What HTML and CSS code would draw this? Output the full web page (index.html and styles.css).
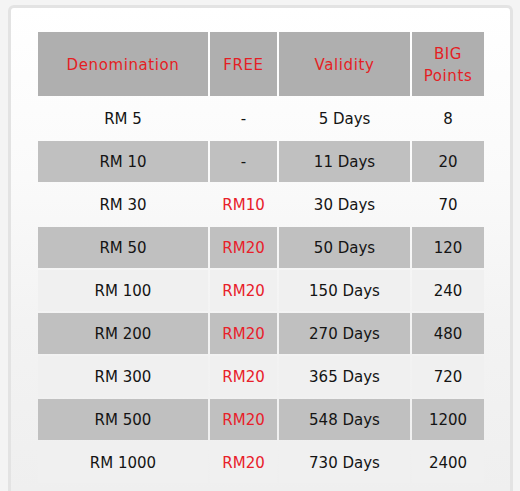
FILE: index.html
```html
<!DOCTYPE html>
<html>
<head>
<meta charset="utf-8">
<link rel="stylesheet" href="styles.css">
</head>
<body>
<div class="panel">
  <table class="rates">
    <colgroup>
      <col class="c-denom">
      <col class="c-free">
      <col class="c-valid">
      <col class="c-points">
    </colgroup>
    <thead>
      <tr>
        <th>Denomination</th>
        <th>FREE</th>
        <th>Validity</th>
        <th>BIG Points</th>
      </tr>
    </thead>
    <tbody>
      <tr class="plain"><td>RM 5</td><td>-</td><td>5 Days</td><td>8</td></tr>
      <tr class="grey"><td>RM 10</td><td>-</td><td>11 Days</td><td>20</td></tr>
      <tr class="plain"><td>RM 30</td><td class="free">RM10</td><td>30 Days</td><td>70</td></tr>
      <tr class="grey"><td>RM 50</td><td class="free">RM20</td><td>50 Days</td><td>120</td></tr>
      <tr class="light"><td>RM 100</td><td class="free">RM20</td><td>150 Days</td><td>240</td></tr>
      <tr class="grey"><td>RM 200</td><td class="free">RM20</td><td>270 Days</td><td>480</td></tr>
      <tr class="light"><td>RM 300</td><td class="free">RM20</td><td>365 Days</td><td>720</td></tr>
      <tr class="grey"><td>RM 500</td><td class="free">RM20</td><td>548 Days</td><td>1200</td></tr>
      <tr class="light"><td>RM 1000</td><td class="free">RM20</td><td>730 Days</td><td>2400</td></tr>
    </tbody>
  </table>
</div>
</body>
</html>
```
FILE: styles.css
```css
html, body {
  margin: 0;
  padding: 0;
  background: #f4f4f4;
  height: 100%;
  overflow: hidden;
}

body {
  font-family: "DejaVu Sans", sans-serif;
}

.panel {
  margin: 5px 7px 0 8px;
  border: 3px solid #e3e3e3;
  border-bottom: none;
  border-radius: 6px 6px 0 0;
  background: linear-gradient(to bottom, #ffffff 0%, #fafafa 35%, #f3f3f3 65%, #efefef 100%);
  padding: 22px 24px 0 25px;
  height: calc(100% - 5px);
  box-sizing: border-box;
}

.rates {
  border-collapse: separate;
  border-spacing: 2px;
  table-layout: fixed;
  width: 450px;
}

.c-denom { width: 170px; }
.c-free { width: 67px; }
.c-valid { width: 131px; }
.c-points { width: 72px; }

.rates th {
  background: #afafaf;
  color: #e41e24;
  font-weight: normal;
  font-size: 15px;
  letter-spacing: 0.6px;
  line-height: 22px;
  height: 64px;
  padding: 2px 4px 0;
  text-align: center;
  vertical-align: middle;
  box-sizing: border-box;
}

.rates td {
  height: 41px;
  padding: 1px 0 0;
  font-size: 15px;
  color: #141414;
  text-align: center;
  vertical-align: middle;
  box-sizing: border-box;
}

.rates tr.grey td {
  background: #c0c0c0;
}

.rates tr.light td {
  background: #f0f0f0;
}

.rates td.free {
  color: #e8202a;
}
```
